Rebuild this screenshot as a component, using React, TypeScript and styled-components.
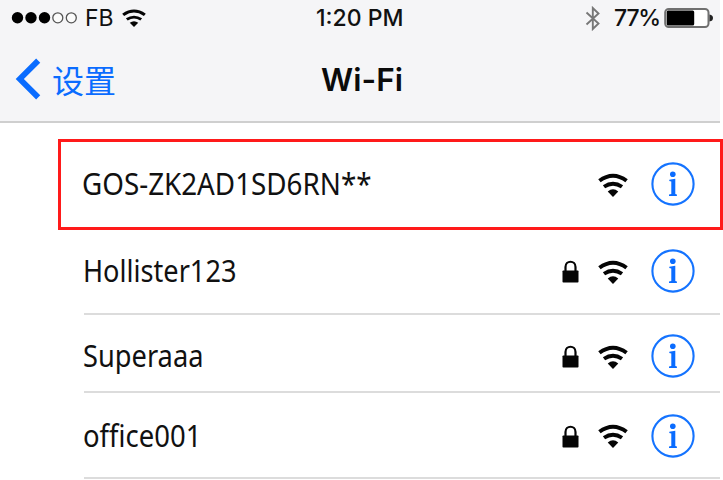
import React from "react";
import styled, { createGlobalStyle } from "styled-components";

const GlobalStyle = createGlobalStyle`
  *, *::before, *::after { box-sizing: border-box; }
  body { margin: 0; background: #fff; overflow: hidden; }
`;

const Screen = styled.main`
  width: 723px;
  height: 480px;
  overflow: hidden;
  background: #fff;
  color: #111;
`;

const Header = styled.header`
  width: 720px;
  height: 123px;
  background: #f5f5f7;
  border-bottom: 2px solid #cfcfcf;
`;

const StatusBar = styled.div`
  display: grid;
  grid-template-columns: 1fr auto 1fr;
  align-items: center;
  height: 36px;
  padding: 0 7px 0 11px;
`;

const StatusGroup = styled.div<{ $end?: boolean }>`
  display: flex;
  align-items: center;
  justify-content: ${(p) => (p.$end ? "flex-end" : "flex-start")};
`;

const StatusText = styled.span<{ $width: number; $left?: number; $right?: number; $weight?: number; $spacing?: number }>`
  width: ${(p) => p.$width}px;
  margin-left: ${(p) => p.$left ?? 0}px;
  margin-right: ${(p) => p.$right ?? 0}px;
  font: ${(p) => p.$weight ?? 400} 23px/36px Inter, "Liberation Sans", sans-serif;
  letter-spacing: ${(p) => p.$spacing ?? 0}px;
  white-space: nowrap;
`;

const NavBar = styled.nav`
  display: grid;
  grid-template-columns: 1fr auto 1fr;
  align-items: center;
  height: 85px;
  padding: 0 0 0 15px;
`;

const BackButton = styled.a`
  display: flex;
  align-items: center;
  gap: 11px;
  color: #0a6cff;
  font: 400 32px/44px "Noto Sans CJK SC", sans-serif;
`;

const Title = styled.h1`
  margin: 2px 0 0 -11px;
  font: 600 31.5px/44px Inter, "Liberation Sans", sans-serif;
  color: #0b0b0b;
`;

const NetworkList = styled.ul`
  margin: 16px 0 0;
  padding: 0;
  list-style: none;
`;

const NetworkRow = styled.li<{ $height: number; $shift?: number; $selected?: boolean }>`
  display: flex;
  align-items: center;
  height: ${(p) => p.$height}px;
  margin-left: ${(p) => (p.$selected ? 58 : 84)}px;
  margin-right: ${(p) => (p.$selected ? 0 : 3)}px;
  padding: ${(p) => p.$shift ?? 0}px 25px 0 ${(p) => (p.$selected ? 22 : 0)}px;
  ${(p) => (p.$selected ? "border: 3px solid #ff1a1a;" : "border-bottom: 2px solid #dcdcdc;")}
`;

const NetworkName = styled.span<{ $scale: number }>`
  flex: 1;
  margin: -3px 0 0 -1px;
  font: 400 30.5px/40px "Noto Sans", "Open Sans", sans-serif;
  white-space: nowrap;
  transform: scaleX(${(p) => p.$scale});
  transform-origin: left center;
`;

const RowIcons = styled.div`
  display: flex;
  align-items: center;
  gap: 19px;
`;

const InfoButton = styled.span`
  display: flex;
  margin: -1px 0 0 4px;
`;

const SignalDots = () => (
  <svg width="67" height="14" viewBox="0 0 67 14">
    {[6.5, 20, 33.5].map((x) => <circle key={x} cx={x} cy="6.8" r="5.7" fill="#000" />)}
    {[46.8, 60.3].map((x) => <circle key={x} cx={x} cy="6.8" r="5" fill="#fbfbfb" stroke="#555" strokeWidth="1.3" />)}
  </svg>
);

const WifiIcon = ({ width = 30, height = 24 }: { width?: number; height?: number }) => (
  <svg width={width} height={height} viewBox="0 0 29 24" preserveAspectRatio="none" fill="none" stroke="#050505" strokeWidth="3.8">
    <path d="M1.4 7.8Q14.5-2.4 27.6 7.8" />
    <path d="M5.8 13.8Q14.5 7.8 23.2 13.8" />
    <path d="M9.4 18.4Q14.5 14.2 19.6 18.4L14.5 24Z" fill="#050505" stroke="none" />
  </svg>
);

const LockIcon = () => (
  <svg width="17" height="23" viewBox="0 0 17 23">
    <path d="M3.5 11V7C3.5 0 13.5 0 13.5 7V11" fill="none" stroke="#050505" strokeWidth="2.2" />
    <rect x=".5" y="10.5" width="16" height="12" rx=".8" fill="#050505" />
  </svg>
);

const InfoIcon = () => (
  <svg width="44" height="44" viewBox="0 0 44 44" fill="#0a6cff">
    <circle cx="22" cy="22" r="20.6" fill="none" stroke="#1473ff" strokeWidth="2.1" />
    <circle cx="21.8" cy="12.2" r="2.8" />
    <path d="M18.3 17.8L24.3 16.8V32L25.9 32.6V34H18V32.6L20.3 32V19.6L18.3 19Z" />
  </svg>
);

const BluetoothIcon = () => (
  <svg width="16" height="25" viewBox="0 0 16 25" fill="none" stroke="#777" strokeWidth="1.9">
    <path d="M1.5 6.5L13.5 17.5L7.8 23V2L13.5 7.5L1.5 18.5" />
  </svg>
);

const BatteryIcon = () => (
  <svg width="49" height="21" viewBox="0 0 49 21">
    <rect x="1.2" y="1" width="43.3" height="18" rx="3.5" fill="#fff" stroke="#707070" strokeWidth="2" />
    <rect x="2.7" y="2.5" width="27.5" height="15" rx="1.5" fill="#000" />
    <path d="M45.5 6.5Q49 7 49 10T45.5 13.5Z" fill="#222" />
  </svg>
);

const BackIcon = () => (
  <svg width="26" height="42" viewBox="0 0 26 42" fill="none" stroke="#0a6cff" strokeWidth="5.8">
    <path d="M23.2 2.6L4.8 21L23.2 39.4" />
  </svg>
);

const networks = [
  { name: "GOS-ZK2AD1SD6RN**", scale: 0.911, height: 91, selected: true },
  { name: "Hollister123", scale: 0.89, height: 85, locked: true },
  { name: "Superaaa", scale: 0.893, height: 78, shift: 7, locked: true },
  { name: "office001", scale: 0.9, height: 86, shift: 2, locked: true },
];

export default function App() {
  return (
    <>
      <GlobalStyle />
      <Screen>
        <Header>
          <StatusBar>
            <StatusGroup>
              <SignalDots />
              <StatusText $width={28} $left={7} $right={9}>FB</StatusText>
              <WifiIcon width={24} height={18} />
            </StatusGroup>
            <StatusText $width={92} $weight={500}>1:20 PM</StatusText>
            <StatusGroup $end>
              <BluetoothIcon />
              <StatusText $width={50} $left={13} $weight={500} $spacing={-1.2}>77%</StatusText>
              <BatteryIcon />
            </StatusGroup>
          </StatusBar>
          <NavBar>
            <BackButton><BackIcon />设置</BackButton>
            <Title>Wi-Fi</Title>
          </NavBar>
        </Header>
        <NetworkList>
          {networks.map((n) => (
            <NetworkRow key={n.name} $height={n.height} $shift={n.shift} $selected={n.selected}>
              <NetworkName $scale={n.scale}>{n.name}</NetworkName>
              <RowIcons>
                {n.locked && <LockIcon />}
                <WifiIcon />
                <InfoButton><InfoIcon /></InfoButton>
              </RowIcons>
            </NetworkRow>
          ))}
        </NetworkList>
      </Screen>
    </>
  );
}
